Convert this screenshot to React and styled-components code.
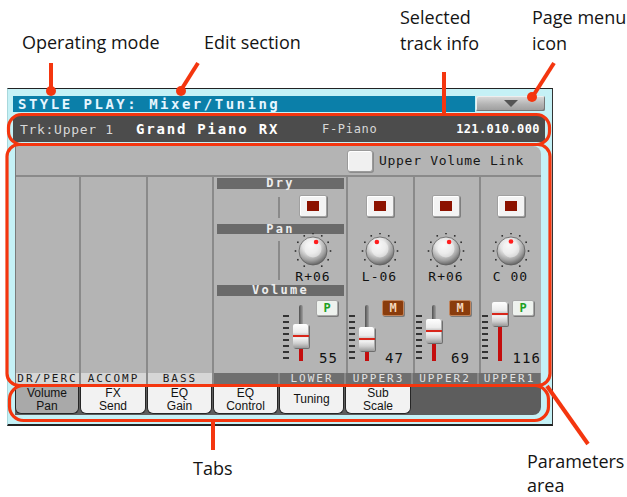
import React from "react";
import styled, { createGlobalStyle } from "styled-components";

const GlobalStyle = createGlobalStyle`
  html, body { margin: 0; padding: 0; background: #fff; }
  body { width: 627px; height: 497px; overflow: hidden; }
`;

const RED = "#f4360f";
const MONO = `"DejaVu Sans Mono", "Liberation Mono", monospace`;
const COLS = [65, 67, 66, 66, 66, 67, 66, 63];
const COL_TEMPLATE = COLS.map((w) => w + "px").join(" ");

// page + screen frame
const Page = styled.div`
  position: relative;
  width: 627px;
  height: 497px;
  padding: 88px 0 0 7px;
  box-sizing: border-box;
`;

const Screen = styled.div`
  width: 546px;
  height: 338px;
  box-sizing: border-box;
  background: #c5f1f6;
  border-top: 1px solid #222;
  border-right: 1px solid #333;
  border-bottom: 2px solid #222;
  border-left: 1px solid #a8d8dc;
  padding: 7px 7px 0 5px;
  display: flex;
  flex-direction: column;
`;

const TitleRow = styled.div`
  display: flex;
  height: 16px;
  gap: 1px;
`;

const TitleBar = styled.div`
  flex: 1;
  background: #0b7fa9;
  color: #e6f6ff;
  font: bold 14px/16px ${MONO};
  letter-spacing: 2.5px;
  padding-left: 5px;
  white-space: nowrap;
`;

const MenuButton = styled.div`
  width: 69px;
  height: 15px;
  border-radius: 2px;
  background: linear-gradient(180deg, #dcdcdc 0%, #b4b4b4 55%, #9c9c9c 100%);
  box-shadow: inset -1px -1px 0 #777, inset 1px 1px 0 #eee;
  display: flex;
  align-items: center;
  justify-content: center;
`;

const TrackBar = styled.div`
  margin-top: 4px;
  height: 26px;
  background: #4c4c4c;
  display: grid;
  grid-template-columns: 116px 186px 1fr auto;
  align-items: center;
  padding: 0 5px 0 7px;
  font-family: ${MONO};
  white-space: nowrap;
`;

const TrackText = styled.span`
  color: ${(p) => (p.$bright ? "#ffffff" : "#d8d8d8")};
  font-size: ${(p) => p.$size || 13}px;
  font-weight: ${(p) => (p.$bold ? "bold" : "normal")};
  letter-spacing: ${(p) => p.$ls || 0.7}px;
`;

// parameters area
const ParamArea = styled.div`
  margin: 4px 4px 0 2px;
  height: 238px;
  background: #b4b4b4;
  border-left: 1px solid #7a7a7a;
  border-radius: 0 8px 0 0;
  display: flex;
  flex-direction: column;
  overflow: hidden;
  font-family: ${MONO};
`;

const TopRow = styled.div`
  height: 29px;
  border-bottom: 2px solid #8a8a8a;
  display: flex;
  align-items: center;
  justify-content: flex-end;
  gap: 6px;
  padding-right: 17px;
  font-size: 13px;
  letter-spacing: 0.7px;
  color: #161616;
`;

const CheckBox = styled.div`
  width: 26px;
  height: 22px;
  box-sizing: border-box;
  background: #f0f0f0;
  border: 1px solid #9a9a9a;
  border-radius: 3px;
  box-shadow: inset 1px 1px 0 #fff, 1px 1px 0 #8c8c8c;
`;

const Body = styled.div`
  display: grid;
  grid-template-columns: ${COL_TEMPLATE};
  grid-template-rows: 12px 34px 10px 51px 11px 78px;
  height: 196px;
`;

const EmptyCol = styled.div`
  grid-column: ${(p) => p.$col};
  grid-row: 1 / -1;
  border-right: 2px solid #8a8a8a;
`;

const ChannelBg = styled.div`
  grid-column: ${(p) => p.$col};
  grid-row: 1 / -1;
  border-left: 2px solid #8a8a8a;
`;

const SectionHead = styled.div`
  grid-column: 4 / 6;
  grid-row: ${(p) => p.$row};
  margin: 1px 2px 0 3px;
  background: #6a6a6a;
  color: #ededed;
  font-size: 12px;
  font-weight: bold;
  letter-spacing: 2.3px;
  line-height: ${(p) => p.$h}px;
  height: ${(p) => p.$h}px;
  text-align: center;
`;

const LabelDivider = styled.div`
  grid-column: 4;
  grid-row: ${(p) => p.$row};
  margin: ${(p) => p.$m};
  border-right: 2px solid #8a8a8a;
`;

const Cell = styled.div`
  grid-column: ${(p) => p.$col};
  grid-row: ${(p) => p.$row};
  display: flex;
  flex-direction: column;
  align-items: center;
  justify-content: ${(p) => (p.$center ? "center" : "flex-start")};
`;

const DryButton = styled.div`
  width: 28px;
  height: 22px;
  box-sizing: border-box;
  background: #f3f3f3;
  border: 1px solid #a0a0a0;
  border-radius: 2px;
  box-shadow: inset 1px 1px 0 #fff, 1px 1px 0 #7e7e7e;
  display: flex;
  align-items: center;
  justify-content: center;
  &::after {
    content: "";
    width: 12px;
    height: 10px;
    background: #8c1200;
  }
`;

const PanValue = styled.div`
  font-size: 13px;
  letter-spacing: 1px;
  line-height: 12px;
  color: #111;
`;

const VolumeCell = styled.div`
  grid-column: ${(p) => p.$col};
  grid-row: 6;
  display: flex;
  padding: 5px 8px 0 3px;
  gap: 4px;
`;

const Scale = styled.div`
  margin-top: 15px;
  display: flex;
  flex-direction: column;
  gap: 4px;
  & > i {
    display: block;
    width: 6px;
    height: 2px;
    background: #333;
  }
`;

const Rail = styled.div`
  position: relative;
  width: 16px;
  height: 56px;
  margin-top: 5px;
`;

const Track = styled.div`
  position: absolute;
  left: 6px;
  top: 0;
  bottom: 0;
  width: 4px;
  border-radius: 2px;
  background: linear-gradient(90deg, #505050, #a0a0a0);
`;

const RedTrack = styled.div`
  position: absolute;
  left: 6px;
  bottom: 0;
  width: 4px;
  background: #c40d0d;
`;

const Cap = styled.div`
  position: absolute;
  left: 0;
  width: 16px;
  height: 24px;
  border-radius: 2px;
  background: linear-gradient(180deg, #ffffff 0%, #ececec 35%, #c4c4c4 48%, #f4f4f4 58%, #d0d0d0 80%, #9a9a9a 100%);
  box-shadow: 1px 1px 0 #6e6e6e, inset -1px 0 0 #aaa;
  &::after {
    content: "";
    position: absolute;
    left: 0;
    right: 0;
    top: 11px;
    height: 2px;
    background: #d8261a;
  }
`;

const VolSide = styled.div`
  flex: 1;
  margin-left: 3px;
  display: flex;
  flex-direction: column;
  align-items: flex-start;
  justify-content: space-between;
  padding-bottom: 9px;
`;

const Badge = styled.div`
  width: 22px;
  height: 16px;
  box-sizing: border-box;
  border-radius: 2px;
  font: bold 12px/14px ${MONO};
  text-align: center;
  background: ${(p) => (p.$mute ? "#8a3c0c" : "#eef2ee")};
  color: ${(p) => (p.$mute ? "#f3d5b8" : "#1ea01e")};
  border: 1px solid ${(p) => (p.$mute ? "#c0845c" : "#a8a8a8")};
  box-shadow: 1px 1px 0 #7a7a7a;
`;

const VolValue = styled.div`
  align-self: flex-end;
  font-size: 14px;
  line-height: 12px;
  letter-spacing: 1.1px;
  color: #111;
  margin-right: ${(p) => p.$mr || 0}px;
`;

const LabelRow = styled.div`
  display: grid;
  grid-template-columns: ${COL_TEMPLATE};
  height: 11px;
  background: #8a8a8a;
`;

const ChanLabel = styled.div`
  margin-right: 2px;
  height: 11px;
  background: ${(p) => (p.$dark ? "#6f6f6f" : "#d6d6d6")};
  color: ${(p) => (p.$dark ? "#e2e2e2" : "#1a1a1a")};
  font-size: 11px;
  line-height: 11px;
  letter-spacing: 2px;
  text-align: center;
  white-space: nowrap;
`;

// tabs
const TabRow = styled.div`
  margin: 2px 4px 0 2px;
  height: 29px;
  background: #5d5d5d;
  border-radius: 0 0 8px 0;
  display: flex;
  align-items: flex-start;
`;

const Tab = styled.div`
  width: ${(p) => p.$w - 1}px;
  margin-right: 1px;
  height: 28px;
  box-sizing: border-box;
  background: ${(p) => (p.$active ? "#a9a9a9" : "#f2f2f2")};
  border: 1px solid #262626;
  border-top: none;
  border-radius: 0 0 6px 6px;
  display: flex;
  align-items: center;
  justify-content: center;
  text-align: center;
  font: 12px/13px "Liberation Sans", Arial, sans-serif;
  color: #121212;
`;

// annotations
const Callout = styled.div`
  position: absolute;
  left: ${(p) => p.$x}px;
  top: ${(p) => p.$y}px;
  font-family: "Open Sans", "Liberation Sans", sans-serif;
  font-size: 18px;
  line-height: ${(p) => p.$lh || 26}px;
  color: #141414;
  white-space: nowrap;
`;

const Overlay = styled.svg`
  position: absolute;
  left: 0;
  top: 0;
  pointer-events: none;
`;

function Knob({ value }) {
  const cx = 21;
  const cy = 18;
  const dots = [];
  for (let a = -150; a <= 150; a += 30) {
    const r = ((a - 90) * Math.PI) / 180;
    dots.push(
      <rect key={a} x={cx + Math.cos(r) * 17.5 - 0.8} y={cy + Math.sin(r) * 17.5 - 0.8} width="1.6" height="1.6" fill="#2e2e2e" />
    );
  }
  const ang = ((value * 3.2 - 90) * Math.PI) / 180;
  return (
    <svg width="42" height="38" viewBox="0 0 42 38">
      <defs>
        <radialGradient id="knobShade" cx="42%" cy="30%" r="72%">
          <stop offset="0" stopColor="#ffffff" />
          <stop offset="0.4" stopColor="#e4e4e4" />
          <stop offset="0.75" stopColor="#a0a0a0" />
          <stop offset="1" stopColor="#5e5e5e" />
        </radialGradient>
      </defs>
      {dots}
      <circle cx={cx} cy={cy} r="14" fill="url(#knobShade)" stroke="#5e5e5e" strokeWidth="0.8" />
      <circle cx={cx} cy={cy - 2} r="8.5" fill="#f2f2f2" opacity="0.55" />
      <circle cx={cx + Math.cos(ang) * 9.5} cy={cy + Math.sin(ang) * 9.5} r="2.3" fill="#ff1d1d" />
    </svg>
  );
}

function Fader({ value }) {
  const capTop = 39 - 0.362 * value;
  const redH = Math.max(0, 56 - (capTop + 12));
  return (
    <>
      <Scale>
        {Array.from({ length: 8 }).map((_, i) => (
          <i key={i} />
        ))}
      </Scale>
      <Rail>
        <Track />
        <RedTrack style={{ height: redH }} />
        <Cap style={{ top: capTop }} />
      </Rail>
    </>
  );
}

const channels = [
  { col: 5, pan: "R+06", panVal: 6, vol: 55, badge: "P", label: "LOWER", mr: 0 },
  { col: 6, pan: "L-06", panVal: -6, vol: 47, badge: "M", label: "UPPER3", mr: 1 },
  { col: 7, pan: "R+06", panVal: 6, vol: 69, badge: "M", label: "UPPER2", mr: 1 },
  { col: 8, pan: "C 00", panVal: 0, vol: 116, badge: "P", label: "UPPER1", mr: -7 },
];

const tabs = [
  ["Volume", "Pan"],
  ["FX", "Send"],
  ["EQ", "Gain"],
  ["EQ", "Control"],
  ["Tuning"],
  ["Sub", "Scale"],
];

export default function App() {
  return (
    <Page>
      <GlobalStyle />
      <Screen>
        <TitleRow>
          <TitleBar>STYLE PLAY: Mixer/Tuning</TitleBar>
          <MenuButton>
            <svg width="14" height="7" viewBox="0 0 14 7">
              <polygon points="0,0 14,0 7,7" fill="#555" />
            </svg>
          </MenuButton>
        </TitleRow>

        <TrackBar>
          <TrackText>Trk:Upper 1</TrackText>
          <TrackText $bright $bold $size={14} $ls={1.8}>Grand Piano RX</TrackText>
          <TrackText $size={12} $ls={0.7}>F-Piano</TrackText>
          <TrackText $bright $bold $size={12} $ls={0.4}>121.010.000</TrackText>
        </TrackBar>

        <ParamArea>
          <TopRow>
            <CheckBox />
            <span>Upper Volume Link</span>
          </TopRow>
          <Body>
            <EmptyCol $col={1} />
            <EmptyCol $col={2} />
            <EmptyCol $col={3} />
            <ChannelBg $col={6} />
            <ChannelBg $col={7} />
            <ChannelBg $col={8} />
            <SectionHead $row={1} $h={11}>Dry</SectionHead>
            <SectionHead $row={3} $h={10}>Pan</SectionHead>
            <SectionHead $row={5} $h={11}>Volume</SectionHead>
            <LabelDivider $row={2} $m="8px 0 5px 0" />
            <LabelDivider $row={4} $m="8px 0 4px 0" />
            {channels.map((c) => (
              <React.Fragment key={c.label}>
                <Cell $col={c.col} $row={2} $center>
                  <DryButton />
                </Cell>
                <Cell $col={c.col} $row={4}>
                  <Knob value={c.panVal} />
                  <PanValue>{c.pan}</PanValue>
                </Cell>
                <VolumeCell $col={c.col}>
                  <Fader value={c.vol} />
                  <VolSide>
                    <Badge $mute={c.badge === "M"}>{c.badge}</Badge>
                    <VolValue $mr={c.mr}>{c.vol}</VolValue>
                  </VolSide>
                </VolumeCell>
              </React.Fragment>
            ))}
          </Body>
          <LabelRow>
            <ChanLabel>DR/PERC</ChanLabel>
            <ChanLabel>ACCOMP</ChanLabel>
            <ChanLabel>BASS</ChanLabel>
            <ChanLabel $dark />
            {channels.map((c) => (
              <ChanLabel key={c.label} $dark>{c.label}</ChanLabel>
            ))}
          </LabelRow>
        </ParamArea>

        <TabRow>
          {tabs.map((t, i) => (
            <Tab key={i} $w={COLS[i]} $active={i === 0}>
              <div>
                {t.map((line, j) => (
                  <div key={j}>{line}</div>
                ))}
              </div>
            </Tab>
          ))}
        </TabRow>
      </Screen>

      <Overlay width="627" height="497" viewBox="0 0 627 497">
        <g fill="none" stroke={RED} strokeWidth="3.2">
          <rect x="8.5" y="114.5" width="541" height="30" rx="13" />
          <rect x="7" y="144.5" width="543" height="241" rx="12" />
          <rect x="9.5" y="385.5" width="539" height="35" rx="14" />
        </g>
        <g stroke={RED} strokeWidth="4" strokeLinecap="butt">
          <line x1="51" y1="63" x2="51" y2="90" />
          <line x1="198" y1="63" x2="181" y2="90" />
          <line x1="444" y1="72" x2="444" y2="114" />
          <line x1="554" y1="63" x2="533" y2="96" />
          <line x1="213" y1="421" x2="213" y2="450" />
          <line x1="547" y1="386" x2="588" y2="444" />
        </g>
        <g fill={RED}>
          <circle cx="51" cy="91" r="5" />
          <circle cx="181" cy="91" r="5" />
          <circle cx="532" cy="97" r="5" />
        </g>
      </Overlay>

      <Callout $x={22} $y={29}>Operating mode</Callout>
      <Callout $x={204} $y={29}>Edit section</Callout>
      <Callout $x={400} $y={4}>Selected<br />track info</Callout>
      <Callout $x={532} $y={4}>Page menu<br />icon</Callout>
      <Callout $x={193} $y={455}>Tabs</Callout>
      <Callout $x={527} $y={449} $lh={24}>Parameters<br />area</Callout>
    </Page>
  );
}
